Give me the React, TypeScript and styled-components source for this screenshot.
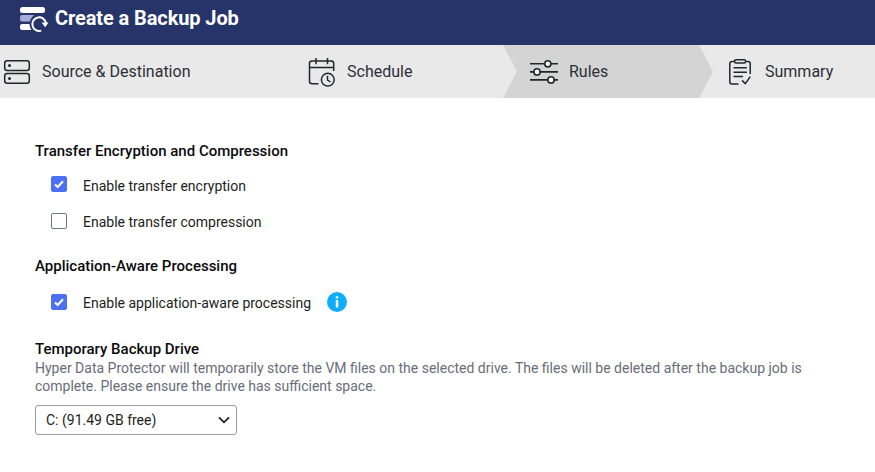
import React from 'react';
import styled, { createGlobalStyle } from 'styled-components';

const GlobalStyle = createGlobalStyle`
  * { box-sizing: border-box; }
  body { margin: 0; background: #fff; font-family: Roboto, "Liberation Sans", sans-serif; }
`;

const Page = styled.div`
  width: 875px;
  height: 472px;
  overflow: hidden;
  background: #fff;
`;

const Header = styled.header`
  display: flex;
  align-items: flex-start;
  gap: 6px;
  height: 45px;
  padding: 6px 0 0 19px;
  background: #263469;
`;

const Title = styled.h1`
  margin: 0;
  font-size: 20px;
  line-height: 24px;
  font-weight: 700;
  letter-spacing: -0.1px;
  color: #fff;
`;

const Steps = styled.nav`
  display: grid;
  grid-template-columns: 308px 195px 196px 176px;
  height: 53px;
  background: #e9e9e9;
`;

const Step = styled.div<{ $active?: boolean; $pad: number; $gap: number }>`
  display: flex;
  align-items: center;
  gap: ${(p) => p.$gap}px;
  padding-left: ${(p) => p.$pad}px;
  position: relative;
  background: ${(p) => (p.$active ? '#d4d4d4' : '#e9e9e9')};
  svg { flex: none; }
`;

const Arrow = styled.i<{ $color: string }>`
  position: absolute;
  left: 0;
  top: 0;
  width: 14px;
  height: 53px;
  background: ${(p) => p.$color};
  clip-path: polygon(0 0, 100% 50%, 0 100%);
`;

const StepLabel = styled.span`
  font-size: 16px;
  line-height: 20px;
  color: #2c2f36;
`;

const Content = styled.main`
  display: flex;
  flex-direction: column;
  padding: 43px 35px 0;
`;

const Section = styled.section<{ $height: number }>`
  height: ${(p) => p.$height}px;
`;

const Heading = styled.h2`
  margin: 0;
  font-size: 15px;
  line-height: 20px;
  font-weight: 500;
  color: #0b0b0d;
`;

const Option = styled.label<{ $top: number }>`
  display: flex;
  align-items: center;
  height: 20px;
  margin-top: ${(p) => p.$top}px;
  padding-left: 16px;
`;

const Box = styled.span<{ $checked?: boolean; $lift?: number }>`
  display: flex;
  width: 16px;
  height: 16px;
  margin: 0 16px ${(p) => p.$lift ?? 3}px 0;
  border: 1px solid ${(p) => (p.$checked ? '#4b70f5' : '#6f7680')};
  border-radius: 2px;
  background: ${(p) => (p.$checked ? '#4b70f5' : '#fff')};
`;

const OptionText = styled.span`
  font-size: 14px;
  line-height: 20px;
  color: #1c1e22;
`;

const InfoIcon = styled.svg`
  margin: 0 0 2px 16px;
`;

const Hint = styled.p`
  margin: 0;
  font-size: 14px;
  line-height: 18px;
  color: #686d78;
  white-space: nowrap;
`;

const Select = styled.div`
  display: flex;
  align-items: center;
  justify-content: space-between;
  width: 202px;
  height: 30px;
  margin-top: 10px;
  padding: 0 6px 0 10px;
  border: 1px solid #9a9da3;
  border-radius: 3px;
  font-size: 14px;
  line-height: 18px;
  color: #1c1e22;
`;

const Check = () => (
  <svg width="14" height="14" viewBox="0 0 14 14" fill="none" stroke="#fff" strokeWidth="2.1">
    <path d="M3 7.4 5.7 10 11 4.2" />
  </svg>
);

const Logo = () => (
  <svg width="30" height="28" viewBox="19 6 30 28" fill="none">
    <rect x="20" y="7" width="25" height="6" rx="2.5" fill="#fff" />
    <path d="M22 15h12.500c-2.400 1.400-3.900 3.600-4.500 6.500H22a2 2 0 0 1-2-2V17a2 2 0 0 1 2-2Z" fill="#a5aad8" />
    <path d="M22 24h7.500c.1 2.400.8 4.300 2 6H22a2 2 0 0 1-2-2v-2a2 2 0 0 1 2-2Z" fill="#fff" />
    <path d="M41.300 30.600a6.800 6.800 0 1 1 4.600-7.400" stroke="#fff" strokeWidth="2" />
    <path d="M41.600 22.600h6.900l-3.300 4.600Z" fill="#fff" />
  </svg>
);

const ServerIcon = () => (
  <svg width="28" height="28" viewBox="3 58 28 28" fill="none" stroke="#23262d" strokeWidth="1.500">
    <rect x="4.700" y="60.700" width="24.600" height="9.800" rx="2.500" />
    <rect x="4.700" y="73.500" width="24.600" height="9.800" rx="2.500" />
    <circle cx="9.500" cy="65.500" r="1.500" fill="#23262d" stroke="none" />
    <circle cx="9.500" cy="78.500" r="1.500" fill="#23262d" stroke="none" />
  </svg>
);

const ScheduleIcon = () => (
  <svg width="28" height="30" viewBox="308 57 28 30" fill="none" stroke="#23262d" strokeWidth="1.500">
    <path d="M318.500 83.700H312a2.500 2.500 0 0 1-2.500-2.500V63.600a2.500 2.500 0 0 1 2.500-2.500h19.200a2.500 2.500 0 0 1 2.500 2.500V71M309.500 67.500h24.200M316 58v6.200M327.500 58v6.200" />
    <circle cx="327.800" cy="79.700" r="6.400" />
    <path d="M327.500 75.800v4.200l3 2" />
  </svg>
);

const RulesIcon = () => (
  <svg width="30" height="26" viewBox="529 59 30 26" stroke="#23262d" strokeWidth="1.600" fill="#fff">
    <path d="M530 63.800h28M530 71.900h28M530 79.900h28" />
    <circle cx="547.800" cy="63.800" r="3.100" />
    <circle cx="537" cy="71.900" r="3.100" />
    <circle cx="551" cy="79.900" r="3.100" />
  </svg>
);

const SummaryIcon = () => (
  <svg width="24" height="28" viewBox="728 58 24 28" fill="none" stroke="#23262d" strokeWidth="1.500">
    <path d="M738.500 84H732a2.200 2.200 0 0 1-2.200-2.200V63.700a2.200 2.200 0 0 1 2.200-2.200h2.500M745.500 61.500h2.500a2.200 2.200 0 0 1 2.200 2.200V74" />
    <rect x="734.600" y="59.700" width="11" height="3.200" rx="1.500" />
    <path d="M733.500 67.700h13.400M733.500 72.200h13.400M733.500 76.500h9.500M742 80.400l3.300 3.200 5-7" />
  </svg>
);

export default function App() {
  return (
    <>
      <GlobalStyle />
      <Page>
        <Header>
          <Logo />
          <Title>Create a Backup Job</Title>
        </Header>
        <Steps>
          <Step $pad={3} $gap={11}>
            <ServerIcon />
            <StepLabel>Source &amp; Destination</StepLabel>
          </Step>
          <Step $pad={0} $gap={11}>
            <ScheduleIcon />
            <StepLabel>Schedule</StepLabel>
          </Step>
          <Step $active $pad={26} $gap={10}>
            <Arrow $color="#e9e9e9" />
            <RulesIcon />
            <StepLabel>Rules</StepLabel>
          </Step>
          <Step $pad={29} $gap={13}>
            <Arrow $color="#d4d4d4" />
            <SummaryIcon />
            <StepLabel>Summary</StepLabel>
          </Step>
        </Steps>
        <Content>
          <Section $height={115}>
            <Heading>Transfer Encryption and Compression</Heading>
            <Option $top={15}>
              <Box $checked $lift={4} ><Check /></Box>
              <OptionText>Enable transfer encryption</OptionText>
            </Option>
            <Option $top={16}>
              <Box />
              <OptionText>Enable transfer compression</OptionText>
            </Option>
          </Section>
          <Section $height={83}>
            <Heading>Application-Aware Processing</Heading>
            <Option $top={17}>
              <Box $checked><Check /></Box>
              <OptionText>Enable application-aware processing</OptionText>
              <InfoIcon width="20" height="20" viewBox="0 0 20 20">
                <circle cx="10" cy="10" r="10" fill="#0eaefb" />
                <path d="M8.800 4.200h2.400v2.200H8.800zM8.800 8h2.400v7.600H8.800z" fill="#fff" />
              </InfoIcon>
            </Option>
          </Section>
          <Section $height={130}>
            <Heading>Temporary Backup Drive</Heading>
            <Hint>
              Hyper Data Protector will temporarily store the VM files on the selected drive. The files will be deleted after the backup job is
              <br />
              complete. Please ensure the drive has sufficient space.
            </Hint>
            <Select>
              C: (91.49 GB free)
              <svg width="12" height="8" viewBox="0 0 12 8" fill="none" stroke="#1c1e22" strokeWidth="1.800">
                <path d="M1 1.300 6 6.300 11 1.300" />
              </svg>
            </Select>
          </Section>
        </Content>
      </Page>
    </>
  );
}
